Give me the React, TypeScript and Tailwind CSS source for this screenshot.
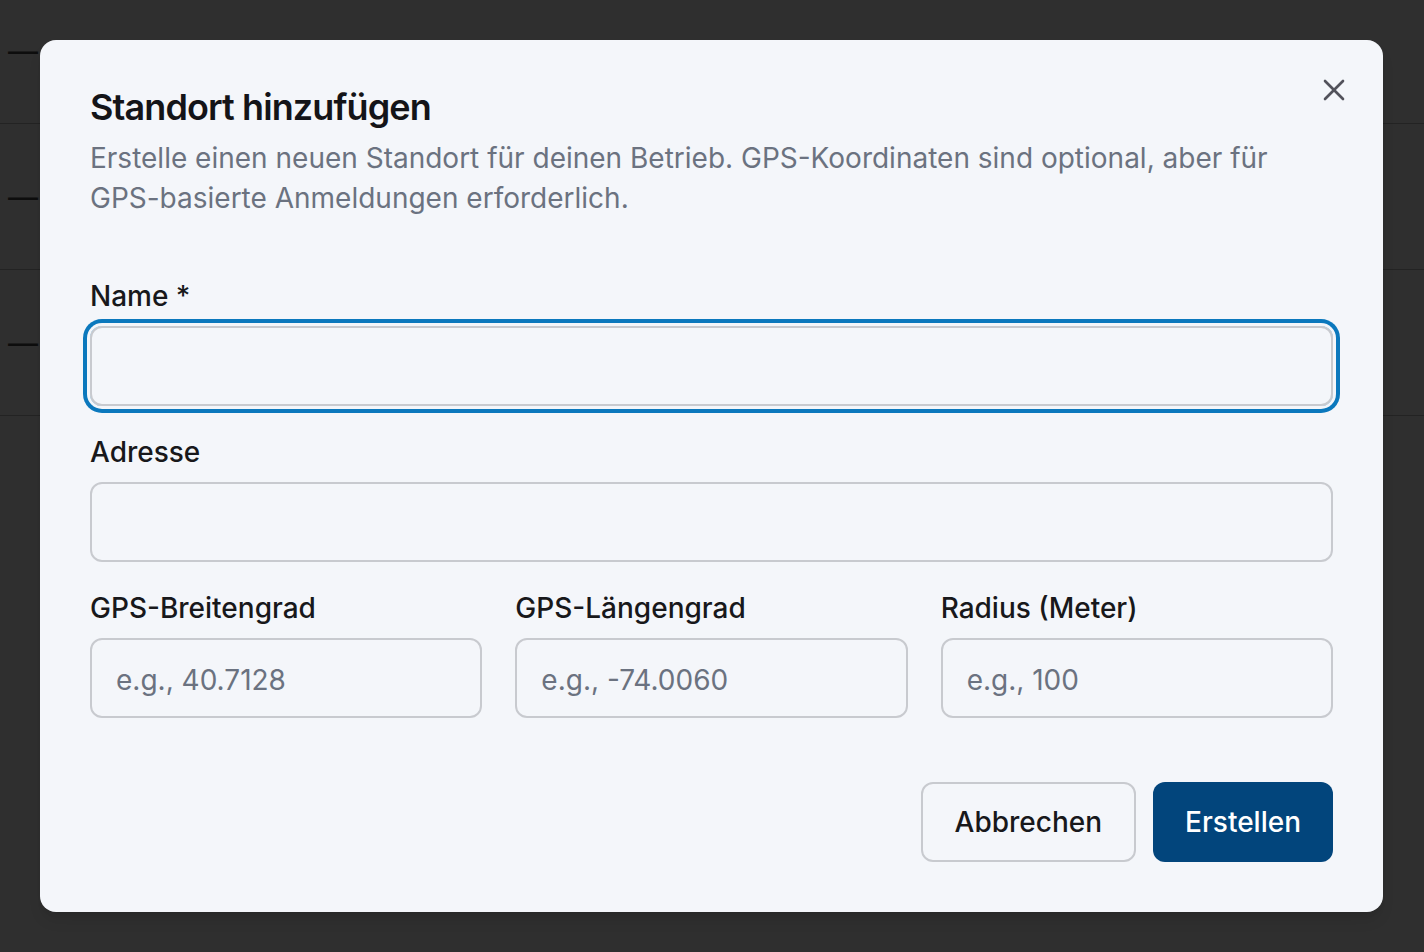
import { X } from "lucide-react";

const rows = [0, 1, 2];

function Field({
  label,
  placeholder,
  focused,
}: {
  label: string;
  placeholder?: string;
  focused?: boolean;
}) {
  return (
    <div className="flex flex-col">
      <label className="mb-[14px] text-[28px] font-medium leading-8 text-[#18181b]">
        {label}
      </label>
      <input
        type="text"
        placeholder={placeholder}
        className={`h-20 w-full rounded-xl border-2 border-[#c8cacf] bg-transparent px-6 pt-1 text-[28px] text-[#18181b] placeholder:text-[#6b7280] focus:outline-none ${
          focused ? "shadow-[0_0_0_3px_#f4f6fa,0_0_0_7px_#0b78bd]" : ""
        }`}
      />
    </div>
  );
}

export default function App() {
  return (
    <div
      className="relative h-[952px] w-[1424px] overflow-hidden bg-[#2f2f2f]"
      style={{ fontFamily: "Inter, 'Noto Sans', sans-serif" }}
    >
      {/* table behind the overlay */}
      <div className="-mt-[22px] flex flex-col">
        {rows.map((r) => (
          <div
            key={r}
            className="flex h-[146px] items-center border-b border-[#232323] pl-2"
          >
            <span className="text-[30px] leading-none text-[#0d0d0d]">—</span>
          </div>
        ))}
      </div>

      {/* dialog */}
      <div className="absolute left-10 top-10 w-[1343px] rounded-2xl bg-[#f4f6fa] px-[50px] pb-[50px] pt-[47px] shadow-lg">
        <button className="absolute right-[31px] top-[32px] text-[#52525b]">
          <X size={36} strokeWidth={1.75} />
        </button>

        <h2 className="text-[36px] font-semibold leading-10 tracking-tight text-[#141418]">
          Standort hinzufügen
        </h2>
        <p className="mt-[11px] text-[28px] leading-10 text-[#6b7280]">
          Erstelle einen neuen Standort für deinen Betrieb. GPS-Koordinaten sind
          optional, aber für GPS-basierte Anmeldungen erforderlich.
        </p>

        <div className="mt-[62px] flex flex-col gap-[30px]">
          <Field label="Name *" focused />
          <Field label="Adresse" />
          <div className="grid grid-cols-3 gap-[33px]">
            <Field label="GPS-Breitengrad" placeholder="e.g., 40.7128" />
            <Field label="GPS-Längengrad" placeholder="e.g., -74.0060" />
            <Field label="Radius (Meter)" placeholder="e.g., 100" />
          </div>
        </div>

        <div className="mt-[64px] flex justify-end gap-[17px]">
          <button className="h-20 rounded-xl border-2 border-[#c8cacf] px-[32px] text-[28px] font-medium text-[#18181b]">
            Abbrechen
          </button>
          <button className="h-20 rounded-xl bg-[#02457c] px-[32px] text-[28px] font-medium text-white">
            Erstellen
          </button>
        </div>
      </div>
    </div>
  );
}
